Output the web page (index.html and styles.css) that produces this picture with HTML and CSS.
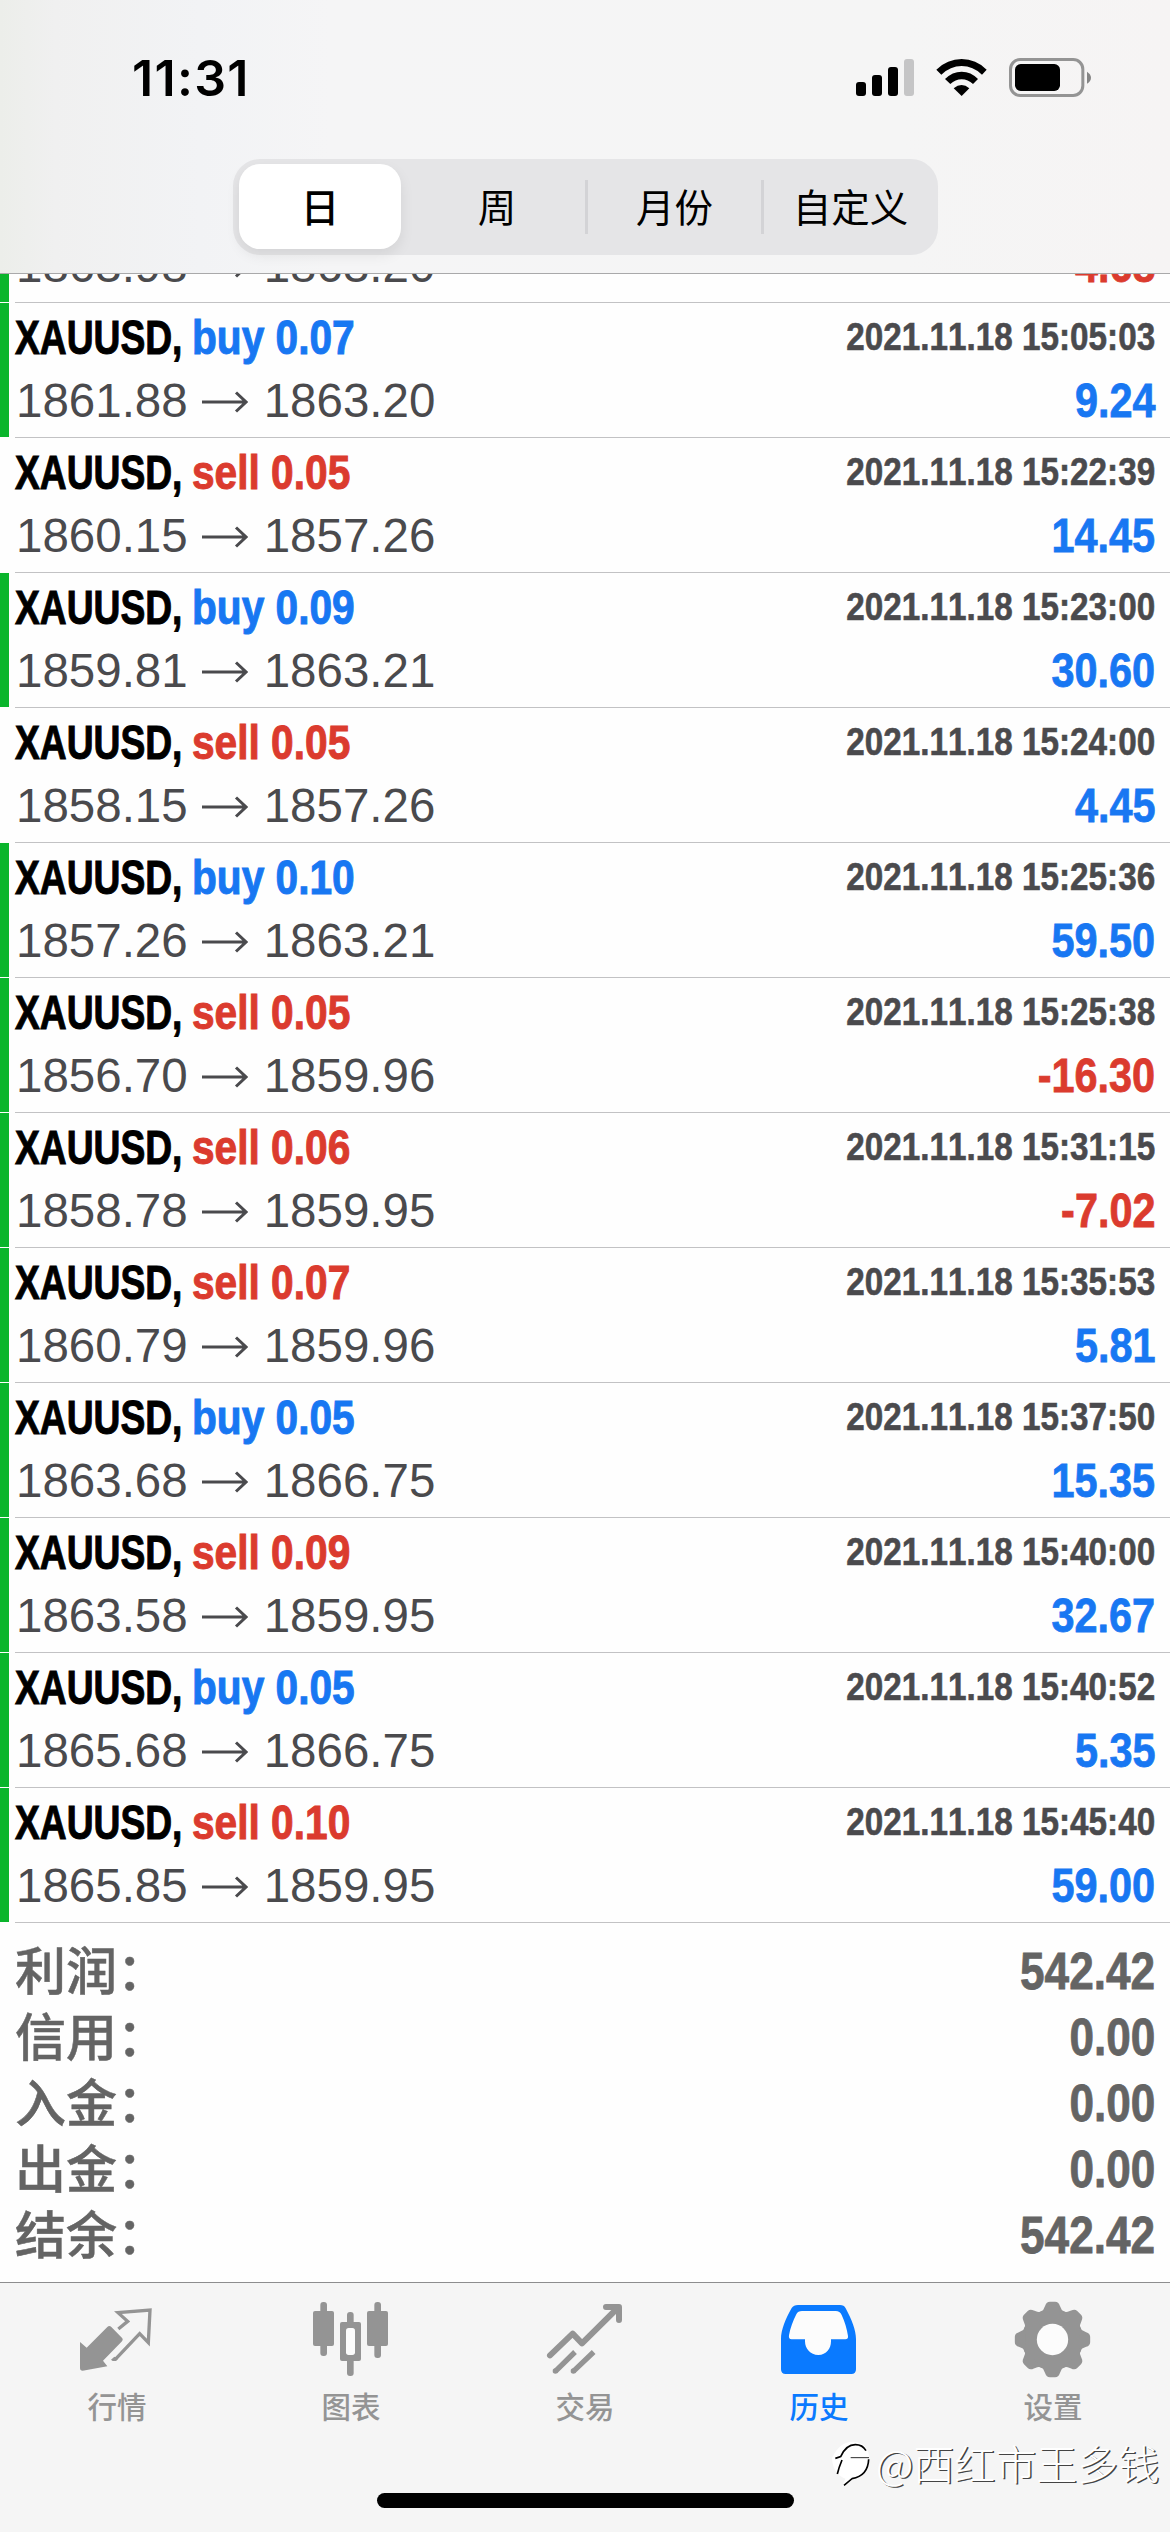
FILE: index.html
```
<!DOCTYPE html>
<html lang="zh-CN">
<head>
<meta charset="utf-8">
<title>历史</title>
<link rel="stylesheet" href="styles.css">
</head>
<body>
<header class="header">
  <div class="status">
    <span class="clock">11:31</span>
    <svg class="status-icons" viewBox="48 54 708 120">
      <rect x="48" y="126" width="30" height="42" rx="9"/>
      <rect x="96" y="105" width="30" height="63" rx="9"/>
      <rect x="144" y="81" width="30" height="87" rx="9"/>
      <rect x="192" y="57" width="30" height="111" rx="9" fill="#c5c5c6"/>
      <path d="M289 89Q322 57 365 57Q408 57 440 89L426 104Q399 78 365 78Q331 78 304 104Z"/>
      <path d="M315 117Q337 95 365 95Q393 95 414 117L399 132Q384 118 365 118Q346 118 331 132Z"/>
      <path d="M341 145Q365 125 388 145L365 168Z"/>
      <rect x="511.500" y="58.500" width="217" height="108" rx="29" fill="none" stroke="#949494" stroke-width="9"/>
      <rect x="525" y="72" width="135" height="81" rx="17"/>
      <path d="M741 95Q753 103 753 113Q753 123 741 131Z" fill="#858585"/>
    </svg>
  </div>
  <nav class="segments">
    <span class="segment segment-on">日</span>
    <span class="segment">周</span>
    <span class="segment divided">月份</span>
    <span class="segment divided">自定义</span>
  </nav>
</header>
<main class="content">
  <ul class="deals" id="deals"></ul>
  <dl class="summary">
    <div class="sum"><dt>利润：</dt><dd>542.42</dd></div>
    <div class="sum"><dt>信用：</dt><dd>0.00</dd></div>
    <div class="sum"><dt>入金：</dt><dd>0.00</dd></div>
    <div class="sum"><dt>出金：</dt><dd>0.00</dd></div>
    <div class="sum"><dt>结余：</dt><dd>542.42</dd></div>
  </dl>
</main>
<footer class="tabbar">
  <nav class="tabs">
    <div class="tab">
      <svg viewBox="51 60 240 240">
        <path d="M60 186L80 203L142 141Q148 135 154 141L187 175Q190 180 186 184L129 242L142 259L68 272Q60 272 60 264Z"/>
        <path class="line" stroke-width="10" d="M175 147L203 124L174 98L270 90L265 188L239 161L166 238"/>
        <path d="M153 239L163 230L174 236L168 243H158Z"/>
      </svg>
      <span>行情</span>
    </div>
    <div class="tab">
      <svg viewBox="753 60 240 240">
        <rect x="781" y="66" width="20" height="162" rx="9"/><rect x="759" y="93" width="63" height="105" rx="6"/>
        <rect x="943" y="66" width="20" height="168" rx="9"/><rect x="921" y="93" width="63" height="105" rx="6"/>
        <rect x="861" y="96" width="20" height="192" rx="9"/><rect x="840" y="126" width="63" height="117" rx="6"/>
        <rect x="858" y="144" width="27" height="81" rx="8" fill="#fcfcfc"/>
      </svg>
      <span>图表</span>
    </div>
    <div class="tab">
      <svg viewBox="75 60 240 240">
        <path class="line" stroke-width="18" stroke-linecap="round" stroke-linejoin="round" d="M90 226L158 161L186 190L293 84M258 81H297V120"/>
        <path class="line" stroke-width="16" d="M165 216L106 274M221 216L160 274"/>
        <circle cx="106" cy="273" r="8"/><circle cx="160" cy="273" r="8"/>
      </svg>
      <span>交易</span>
    </div>
    <div class="tab tab-on">
      <svg viewBox="777 60 240 240">
        <path d="M834 75H960Q972 75 977 85C995 119 1008 150 1008 177V268Q1008 282 994 282H797Q783 282 783 268V177C783 150 797 116 815 84Q821 75 834 75Z"/>
        <path fill="#fcfcfc" d="M846 93H947Q960 93 965 105C974 125 981 147 984 168Q985 178 976 178H933V184C933 206 919 225 895 225C871 225 855 206 855 184V178H815Q805 178 807 166C811 144 819 122 829 103Q834 93 846 93Z"/>
      </svg>
      <span>历史</span>
    </div>
    <div class="tab">
      <svg viewBox="579 60 240 240">
        <g transform="translate(697.500 178.500)">
          <circle r="92"/>
          <path id="tooth" d="M-34 -82Q-27 -87 -22 -101Q-18 -113 -8 -113H8Q18 -113 22 -101Q27 -87 34 -82Z"/>
          <use href="#tooth" transform="rotate(45)"/><use href="#tooth" transform="rotate(90)"/>
          <use href="#tooth" transform="rotate(135)"/><use href="#tooth" transform="rotate(180)"/>
          <use href="#tooth" transform="rotate(225)"/><use href="#tooth" transform="rotate(270)"/>
          <use href="#tooth" transform="rotate(315)"/>
          <circle r="47" fill="#fcfcfc"/>
        </g>
      </svg>
      <span>设置</span>
    </div>
  </nav>
  <div class="home"></div>
</footer>
<div class="mark">
  <svg viewBox="30 495 150 150">
    <path fill="#fff" d="M36 552Q58 503 100 503Q148 506 148 556Q146 606 98 618L66 638L76 614Q38 600 36 552Z"/>
    <path fill="none" stroke="#000" stroke-width="5" d="M46 553L62 548Q78 512 106 512Q128 512 138 530M146 556Q144 606 96 614L72 634M66 558Q56 582 52 600"/>
    <path fill="none" stroke="#000" stroke-width="2.500" d="M92 551H147"/>
  </svg>
  <span>@西红市王多钱</span>
</div>
<script src="deals.js"></script>
</body>
</html>
```
FILE: deals.js
```
const deals = [
  ["buy", "0.07", "1861.88", "1863.20", "2021.11.18 15:05:03", "9.24", 1],
  ["sell", "0.05", "1860.15", "1857.26", "2021.11.18 15:22:39", "14.45", 0],
  ["buy", "0.09", "1859.81", "1863.21", "2021.11.18 15:23:00", "30.60", 1],
  ["sell", "0.05", "1858.15", "1857.26", "2021.11.18 15:24:00", "4.45", 0],
  ["buy", "0.10", "1857.26", "1863.21", "2021.11.18 15:25:36", "59.50", 1],
  ["sell", "0.05", "1856.70", "1859.96", "2021.11.18 15:25:38", "-16.30", 1],
  ["sell", "0.06", "1858.78", "1859.95", "2021.11.18 15:31:15", "-7.02", 1],
  ["sell", "0.07", "1860.79", "1859.96", "2021.11.18 15:35:53", "5.81", 1],
  ["buy", "0.05", "1863.68", "1866.75", "2021.11.18 15:37:50", "15.35", 1],
  ["sell", "0.09", "1863.58", "1859.95", "2021.11.18 15:40:00", "32.67", 1],
  ["buy", "0.05", "1865.68", "1866.75", "2021.11.18 15:40:52", "5.35", 1],
  ["sell", "0.10", "1865.85", "1859.95", "2021.11.18 15:45:40", "59.00", 1]
];

const result = (open, close, profit) => `
  <div class="line2">
    <span class="price">${open}</span>
    <svg class="arrow" viewBox="0 0 46 22"><path d="M0 11H44M34 1.500L44 11L34 20.500"/></svg>
    <span class="price">${close}</span>
    <b class="profit ${profit.startsWith("-") ? "sell" : "buy"}">${profit}</b>
  </div>`;

// The top deal is scrolled under the header; only its result line is left.
const scrolled = `
  <li class="deal deal-scrolled">
    <i class="flag flag-on"></i>
    <div class="body">${result("1863.98", "1863.20", "-4.68")}</div>
  </li>`;

document.getElementById("deals").innerHTML = scrolled + deals.map(
  ([side, lots, open, close, time, profit, hit]) => `
  <li class="deal">
    <i class="flag ${hit ? "flag-on" : ""}"></i>
    <div class="body">
      <div class="line1">
        <b class="symbol">XAUUSD,</b><b class="side ${side}">${side} ${lots}</b><b class="time">${time}</b>
      </div>
      ${result(open, close, profit)}
    </div>
  </li>`).join("");
```
FILE: styles.css
```
* { box-sizing: border-box; margin: 0; padding: 0; }
body {
  width: 1170px;
  height: 2532px;
  overflow: hidden;
  display: flex;
  flex-direction: column;
  position: relative;
  background: #fefefe;
  font-family: "Liberation Sans", "Noto Sans CJK SC", sans-serif;
  font-kerning: none;
}
.header {
  height: 274px;
  flex: none;
  border-bottom: 1px solid #a9a9aa;
  background: linear-gradient(90deg, #eceeea 0, #f0f0f0 55px, #f2f3f5 200px, #f5f5f6 330px, #f5f5f5 900px, #f6f4f4 1170px);
}
.status {
  height: 159px;
  padding: 0 78px 0 132px;
  display: flex;
  justify-content: space-between;
}
.clock {
  font: 600 50px/60px "Inter", sans-serif;
  letter-spacing: 1.3px;
  padding-top: 48px;
}
.status-icons { width: 236px; height: 40px; margin-top: 58px; }
.segments {
  width: 705px;
  height: 96px;
  margin-left: 233px;
  padding: 5px 0 6px 6px;
  border-radius: 27px;
  background: #e5e5e7;
  display: flex;
  align-items: center;
}
.segment {
  width: 176px;
  height: 54px;
  font: 400 38.500px/50px "Noto Sans CJK SC", sans-serif;
  text-align: center;
}
.divided { border-left: 3px solid #d3d3d6; }
.segment-on {
  width: 162px;
  margin-right: 8px;
  height: 85px;
  font-weight: 500;
  line-height: 82px;
  border-radius: 21px;
  background: #fff;
  box-shadow: 0 6px 14px rgba(0, 0, 0, .08);
}
.content { flex: 1; overflow: hidden; }
.deals { list-style: none; margin-top: -40px; }
.deal { height: 135px; display: flex; }
.flag { width: 9px; height: 134px; margin-right: 6px; }
.flag-on { background: #0ab52c; }
.body {
  flex: 1;
  padding: 3px 15px 0 0;
  border-bottom: 1px solid #c2c2c4;
}
.deal-scrolled { height: 69px; }
.deal-scrolled .flag { height: 68px; }
.deal-scrolled .body { padding-top: 0; }
.line1, .line2 { display: flex; height: 63px; align-items: flex-start; white-space: nowrap; }
.symbol, .side { font-size: 48px; line-height: 63px; transform-origin: left; -webkit-text-stroke: 1px; }
.symbol { width: 177px; transform: scaleX(.775); color: #000; }
.side { transform: scaleX(.847); }
.time {
  margin-left: auto;
  font-size: 39px;
  line-height: 61px;
  color: #4a4a4d;
  transform: scaleX(.853);
  transform-origin: right;
  -webkit-text-stroke: .6px;
}
.price { font-size: 47.500px; line-height: 63px; color: #4a4a4d; }
.line2 .price:first-child { padding-left: 1px; }
.arrow { width: 46px; height: 22px; margin: 22px 16px 0 14px; }
.arrow path { fill: none; stroke: #4a4a4d; stroke-width: 3px; }
.profit {
  margin-left: auto;
  font-size: 48px;
  line-height: 63px;
  transform: scaleX(.862);
  transform-origin: right;
  -webkit-text-stroke: .8px;
}
.buy { color: #1877f2; }
.sell { color: #db3b2e; }
.summary { padding: 15px 15px 0; color: #646464; }
.sum { height: 66px; display: flex; justify-content: space-between; }
.sum dt { font: 500 51px/60px "Noto Sans CJK SC", sans-serif; -webkit-text-stroke: .5px; }
.sum dd {
  font-size: 51px;
  font-weight: 700;
  line-height: 67px;
  transform: scaleX(.865);
  transform-origin: right;
  -webkit-text-stroke: .8px;
}
.tabbar {
  height: 250px;
  flex: none;
  border-top: 1px solid #8d8d8e;
  background: #f5f5f5;
  padding-top: 17px;
}
.tabs { display: flex; height: 193px; }
.tab {
  width: 234px;
  display: flex;
  flex-direction: column;
  align-items: center;
  color: #949494;
  font: 500 29.500px/44px "Noto Sans CJK SC", sans-serif;
}
.tab-on { color: #0a7aff; }
.tab svg { width: 80px; height: 80px; margin-bottom: 3px; fill: currentColor; }
.tab .line { fill: none; stroke: currentColor; }
.home { width: 417px; height: 15px; margin: 0 auto; border-radius: 8px; background: #000; }
.mark {
  position: absolute;
  left: 830px;
  top: 2432px;
  display: flex;
  align-items: center;
  color: #fff;
  font: 300 41px/60px "Noto Sans CJK SC", sans-serif;
  text-shadow: 1.500px 1px 0 #444;
  white-space: nowrap;
}
.mark svg { width: 50px; height: 50px; margin: 4px -4px 0 0; }
```
